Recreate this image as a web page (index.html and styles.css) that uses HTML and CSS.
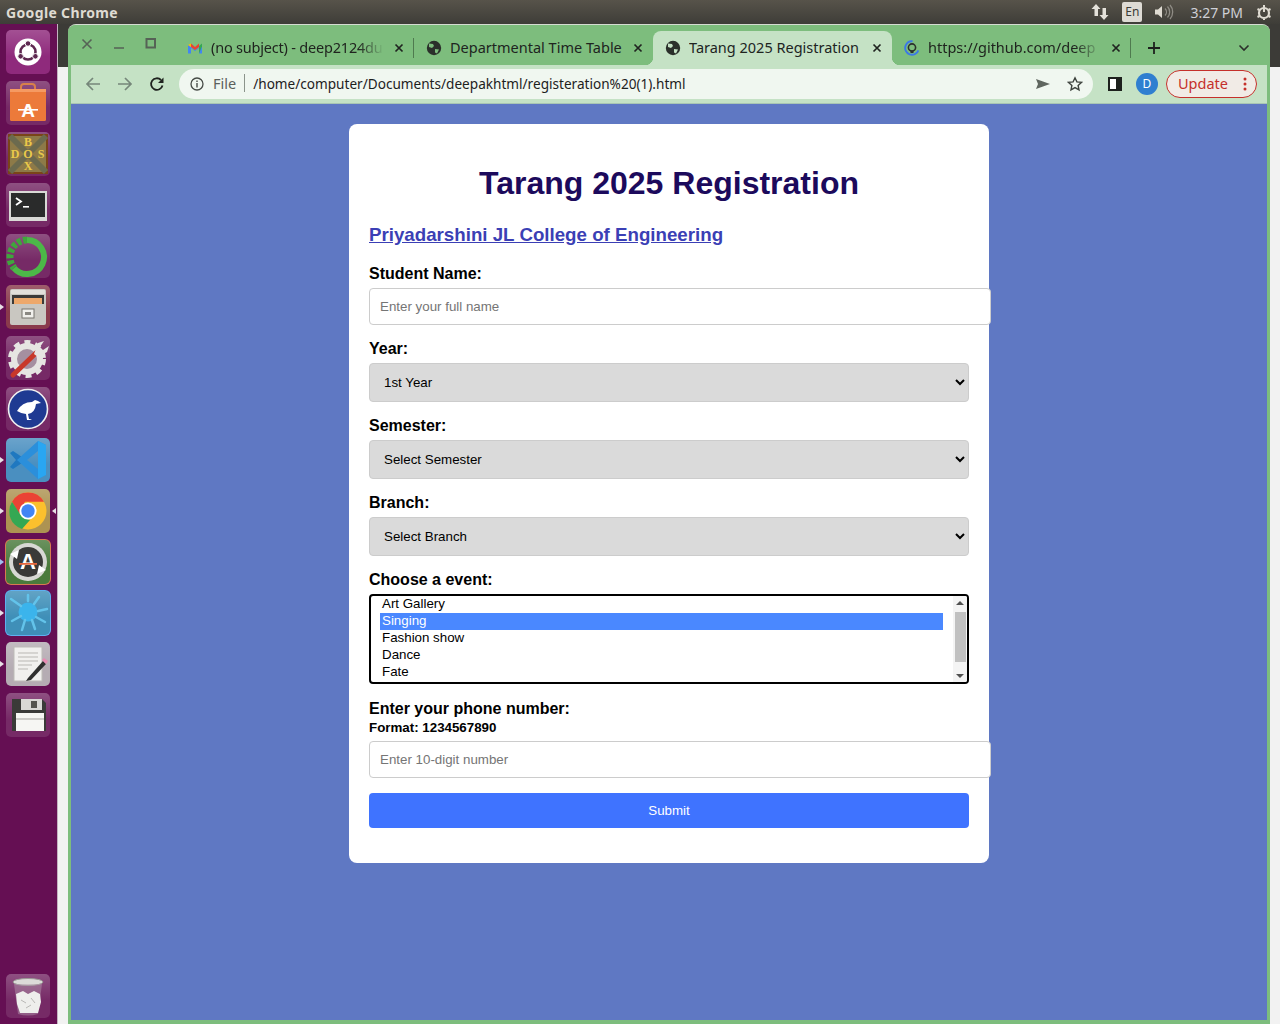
FILE: index.html
```html
<!DOCTYPE html>
<html lang="en">
<head>
    <meta charset="UTF-8">
    <title>Tarang 2025 Registration</title>
    <link rel="stylesheet" href="styles.css">
</head>
<body>
    <!-- ubuntu top panel -->
    <header class="panel">
        <span class="panel-title">Google Chrome</span>
        <div class="tray">
            <svg class="tray-arrows" width="18" height="18" viewBox="0 0 18 18"><path d="M5 1l4.500 5H7v7H3.500V6H.5zM13 17l4.500-5H15V5h-3.500v7H8.500z" fill="#e4e1da"/></svg>
            <span class="tray-lang">En</span>
            <svg class="tray-volume" width="20" height="16" viewBox="0 0 20 16"><path d="M1 5.500h3L8 2v12L4 10.500H1z" fill="#dfdbd2"/><path d="M11 4.500a5 5 0 0 1 0 7M13.500 2.500a8 8 0 0 1 0 11M16 1a10.500 10.500 0 0 1 0 14" fill="none" stroke="#8f8c85" stroke-width="1.300"/></svg>
            <span class="tray-time">3:27 PM</span>
            <svg class="tray-gear" width="16" height="16" viewBox="0 0 16 16"><circle cx="8" cy="9" r="5" fill="none" stroke="#dfdbd2" stroke-width="2.200"/><path d="M8 1v7" stroke="#dfdbd2" stroke-width="2"/><path d="M8 1.500v2M1.500 5l2 1M14.500 5l-2 1M1.500 13l2-1M14.500 13l-2-1M8 15v1" stroke="#dfdbd2" stroke-width="2"/></svg>
        </div>
    </header>

    <div class="desktop">
        <!-- launcher -->
        <nav class="launcher">
            <div class="launcher-top">
                <div class="tile tile-ubuntu">
                    <svg width="44" height="44" viewBox="0 0 44 44"><circle cx="22" cy="22" r="13.500" fill="#fff"/><circle cx="22" cy="22" r="7.500" fill="none" stroke="#5e2750" stroke-width="2.600"/><circle cx="22" cy="13.500" r="2.800" fill="#5e2750" stroke="#fff"/><circle cx="14.600" cy="26.300" r="2.800" fill="#5e2750" stroke="#fff"/><circle cx="29.400" cy="26.300" r="2.800" fill="#5e2750" stroke="#fff"/></svg>
                </div>
                <div class="tile tile-dim">
                    <svg width="44" height="44" viewBox="0 0 44 44"><path d="M15 12V6q0-3 3-3h8q3 0 3 3v6" fill="none" stroke="#d9804a" stroke-width="2"/><rect x="4" y="8" width="36" height="32" rx="1.500" fill="#ec7a3a"/><rect x="4" y="8" width="36" height="3" fill="#f59a62"/><text x="22" y="36" class="icon-letter">A</text><rect x="12" y="28" width="20" height="1.600" fill="#fff"/></svg>
                </div>
                <div class="tile tile-dim">
                    <svg width="44" height="44" viewBox="0 0 44 44"><rect x="3" y="3" width="38" height="38" fill="#8d7a48" stroke="#7a4419" stroke-width="2"/><path d="M4 4l36 36M40 4L4 40" stroke="#6b6a4e" stroke-width="6"/><g class="dos-letters"><text x="22" y="14">B</text><text x="9" y="26">D</text><text x="22" y="26">O</text><text x="35" y="26">S</text><text x="22" y="38">X</text></g></svg>
                </div>
                <div class="tile tile-dim">
                    <svg width="44" height="44" viewBox="0 0 44 44"><rect x="3" y="8" width="38" height="30" fill="#d9d9d6"/><rect x="5" y="10" width="34" height="24" fill="#2a2b2b"/><path d="M10 15l5 3.500-5 3.500" fill="none" stroke="#fff" stroke-width="1.800"/><rect x="17" y="23" width="6" height="1.600" fill="#fff"/></svg>
                </div>
                <div class="tile tile-dim">
                    <svg width="44" height="44" viewBox="0 0 44 44"><path d="M21 6a17 17 0 1 1-13 28" fill="none" stroke="#4cb848" stroke-width="6"/><path d="M21 6A17 17 0 0 0 8 34" fill="none" stroke="#3fa63c" stroke-width="7" stroke-dasharray="4 2"/></svg>
                </div>
                <div class="tile tile-red">
                    <span class="pip"></span>
                    <svg width="44" height="44" viewBox="0 0 44 44"><rect x="4" y="4" width="36" height="36" rx="2" fill="#c9c7c1"/><rect x="5" y="5" width="34" height="4" fill="#e2e0da"/><rect x="6" y="10" width="32" height="9" fill="#3b3a38"/><rect x="8" y="13" width="28" height="6" fill="#eda86b"/><rect x="16" y="24" width="12" height="9" fill="#f1f0ec" stroke="#77756f"/><rect x="19" y="27" width="6" height="3" fill="#8a8882"/></svg>
                </div>
                <div class="tile tile-dim">
                    <svg width="44" height="44" viewBox="0 0 44 44"><circle cx="21" cy="23" r="13" fill="#a58fa0" stroke="#e6e5e2" stroke-width="6"/><circle cx="21" cy="23" r="17" fill="none" stroke="#e6e5e2" stroke-width="4" stroke-dasharray="6 5"/><path d="M7 39l23-22" stroke="#c8382a" stroke-width="5" stroke-linecap="round"/><path d="M28 18l4-11 6-2-4 6 3 3 6-4-2 6-9 5z" fill="#e6e5e2"/></svg>
                </div>
                <div class="tile tile-dim">
                    <svg width="44" height="44" viewBox="0 0 44 44"><circle cx="22" cy="22" r="19.500" fill="#1f3a92" stroke="#f1f1f1" stroke-width="1.600"/><path d="M11 24q5-9 15-9l3-2 3 1 3 2-5 1q-1 9-8 10l1 5h3l-2 1h-3l-1-6q-4 0-9-3z" fill="#fff"/></svg>
                </div>
                <div class="tile tile-blue">
                    <span class="pip"></span>
                    <svg width="44" height="44" viewBox="0 0 44 44"><path d="M13 17L7 13l-3 2 6 7-6 7 3 2 6-4 7-5z" fill="#1f78c0"/><path d="M32 3L11 22l21 19 8-4V7zM32 13v18L21 22z" fill="#2b8fdb" fill-rule="evenodd"/><path d="M32 3l8 4v30l-8 4z" fill="#29a6f2"/></svg>
                </div>
                <div class="tile tile-gold">
                    <span class="pip"></span>
                    <span class="pip pip-right"></span>
                    <svg width="44" height="44" viewBox="0 0 44 44"><circle cx="22" cy="22" r="18.500" fill="#fbc02d"/><path d="M22 3.500a18.500 18.500 0 0 1 16 9.300H22z" fill="#ea4335"/><path d="M6 12.800A18.500 18.500 0 0 1 22 3.500v9.300h-3l-6 12z" fill="#ea4335"/><path d="M6 12.800a18.500 18.500 0 0 0 10 27.300L24 31l-8-3z" fill="#34a853"/><circle cx="22" cy="22" r="8.600" fill="#fff"/><circle cx="22" cy="22" r="6.700" fill="#4285f4"/></svg>
                </div>
                <div class="tile tile-green">
                    <span class="pip pip-hollow"></span>
                    <svg width="44" height="44" viewBox="0 0 44 44"><circle cx="22" cy="22" r="19" fill="#d8d8d4"/><circle cx="22" cy="22" r="15" fill="#3a3a38"/><text x="22" y="29" class="icon-letter icon-letter-big">A</text><rect x="13" y="23" width="18" height="1.800" fill="#e7663c"/><path d="M4 14l9-4-2 9zM40 30l-9 4 2-9z" fill="#fff"/></svg>
                </div>
                <div class="tile tile-sky">
                    <span class="pip"></span>
                    <svg width="44" height="44" viewBox="0 0 44 44"><circle cx="22" cy="21" r="9.500" fill="#3bb4ec"/><path d="M5 8l10 7M22 4v6M33 6l-5 7M41 18l-9 2M39 31l-9-5M29 38l-3-9M16 39l3-10M6 30l9-5" stroke="#63c3ea" stroke-width="2.500" stroke-linecap="round"/></svg>
                </div>
                <div class="tile tile-light">
                    <span class="pip"></span>
                    <svg width="44" height="44" viewBox="0 0 44 44"><rect x="8" y="5" width="28" height="34" fill="#f1f0ee" stroke="#bdbbb7"/><path d="M12 11h20M12 15h20M12 19h20M12 23h14M12 27h10" stroke="#b9b7b3"/><path d="M22 36l15-17 3 3-15 16-5 1z" fill="#2f2f2f"/><path d="M36 18l2-2 4 3-2 3z" fill="#e88ab3"/></svg>
                </div>
                <div class="tile tile-dim">
                    <svg width="44" height="44" viewBox="0 0 44 44"><path d="M6 6h30l4 4v28H6z" fill="#3a3a38"/><rect x="15" y="6" width="21" height="11" fill="#d9d8d5"/><rect x="25" y="8" width="6" height="7" fill="#55544f"/><rect x="10" y="20" width="28" height="18" fill="#f6f6f3"/><path d="M10 26h28" stroke="#a3a19d"/></svg>
                </div>
            </div>
            <div class="tile tile-dim">
                <svg width="44" height="44" viewBox="0 0 44 44"><ellipse cx="22" cy="8" rx="15" ry="3.500" fill="#dcdbd8" stroke="#9a9895"/><path d="M8 10l4 30q10 3 20 0l4-30" fill="#b59cb0" fill-opacity=".45"/><path d="M10 20l7-3 5 3 6-3 6 3 1 8-3 11H14l-3-9z" fill="#eeeeec"/><path d="M15 26l5 3M25 24l4 5M20 34l5-3" stroke="#b9b8b6"/></svg>
            </div>
        </nav>

        <div class="desk">
            <div class="window">
                <!-- tab strip -->
                <div class="tabstrip">
                    <div class="win-controls">
                        <svg width="12" height="12" viewBox="0 0 12 12"><path d="M1.500 1.500l9 9M10.500 1.500l-9 9" stroke="#566256" stroke-width="1.600"/></svg>
                        <svg width="12" height="12" viewBox="0 0 12 12"><path d="M1 10h10" stroke="#566256" stroke-width="1.600"/></svg>
                        <svg width="12" height="12" viewBox="0 0 12 12"><rect x="1.500" y="1" width="8.500" height="8.500" fill="none" stroke="#566256" stroke-width="2"/></svg>
                    </div>
                    <div class="tab tab-sep">
                        <svg class="favicon" width="16" height="16" viewBox="0 0 16 16"><path d="M1 13.500V5l7 5 7-5v8.500h-3V8l-4 3-4-3v5.500z" fill="#4285f4"/><path d="M8 10L4 7V3.500L8 7l4-3.500V7z" fill="#ea4335"/><path d="M12 13.500V6l3-2.500v3z" fill="#34a853"/><path d="M1 5l3-1.500V7z" fill="#fbbc04"/></svg>
                        <span class="tab-title tab-fade tab-tight">(no subject) - deep2124du</span>
                        <svg class="tab-close" width="10" height="10" viewBox="0 0 10 10"><path d="M1.500 1.500l7 7M8.500 1.500l-7 7" stroke="#202420" stroke-width="1.700"/></svg>
                    </div>
                    <div class="tab tab-left-of-active">
                        <svg class="favicon" width="16" height="16" viewBox="0 0 16 16"><circle cx="8" cy="8" r="7.200" fill="#2b302b"/><path d="M3 3.500l4 .5 1 2-2 2-3-1zM9 9l4 .5-2 4-2-1z" fill="#7dbd7d"/></svg>
                        <span class="tab-title">Departmental Time Table</span>
                        <svg class="tab-close" width="10" height="10" viewBox="0 0 10 10"><path d="M1.500 1.500l7 7M8.500 1.500l-7 7" stroke="#202420" stroke-width="1.700"/></svg>
                    </div>
                    <div class="tab tab-active">
                        <svg class="favicon" width="16" height="16" viewBox="0 0 16 16"><circle cx="8" cy="8" r="7.200" fill="#2b302b"/><path d="M3 3.500l4 .5 1 2-2 2-3-1zM9 9l4 .5-2 4-2-1z" fill="#c5e2c5"/></svg>
                        <span class="tab-title">Tarang 2025 Registration</span>
                        <svg class="tab-close" width="10" height="10" viewBox="0 0 10 10"><path d="M1.500 1.500l7 7M8.500 1.500l-7 7" stroke="#202420" stroke-width="1.700"/></svg>
                    </div>
                    <div class="tab tab-sep">
                        <svg class="favicon" width="16" height="16" viewBox="0 0 16 16"><circle cx="8" cy="8" r="6.800" fill="none" stroke="#3b78e7" stroke-width="1.900" stroke-dasharray="30 13" transform="rotate(20 8 8)"/><circle cx="8" cy="7.500" r="3.600" fill="none" stroke="#2b302b" stroke-width="1.600"/><path d="M6.500 10.500v2.500h3v-2.500" fill="#2b302b"/></svg>
                        <span class="tab-title tab-fade">https://github.com/deep</span>
                        <svg class="tab-close" width="10" height="10" viewBox="0 0 10 10"><path d="M1.500 1.500l7 7M8.500 1.500l-7 7" stroke="#202420" stroke-width="1.700"/></svg>
                    </div>
                    <svg class="new-tab" width="12" height="12" viewBox="0 0 12 12"><path d="M6 0v12M0 6h12" stroke="#1d211d" stroke-width="1.800"/></svg>
                    <svg class="tab-search" width="12" height="8" viewBox="0 0 12 8"><path d="M1.500 1.500L6 6l4.500-4.500" fill="none" stroke="#2b302b" stroke-width="1.600"/></svg>
                </div>

                <!-- toolbar -->
                <div class="toolbar">
                    <div class="nav-buttons">
                        <svg width="16" height="16" viewBox="0 0 16 16"><path d="M15 8H2M8 2L2 8l6 6" fill="none" stroke="#76877a" stroke-width="1.700"/></svg>
                        <svg width="16" height="16" viewBox="0 0 16 16"><path d="M1 8h13M8 2l6 6-6 6" fill="none" stroke="#76877a" stroke-width="1.700"/></svg>
                        <svg width="16" height="16" viewBox="0 0 16 16"><path d="M13.500 9.500A5.800 5.800 0 1 1 12 4" fill="none" stroke="#1f231f" stroke-width="1.800"/><path d="M14.500 1.500V7H9z" fill="#1f231f"/></svg>
                    </div>
                    <div class="omnibox">
                        <svg class="info-icon" width="14" height="14" viewBox="0 0 14 14"><circle cx="7" cy="7" r="6" fill="none" stroke="#474c47" stroke-width="1.300"/><path d="M7 6v4.500M7 3.500v1.500" stroke="#474c47" stroke-width="1.400"/></svg>
                        <span class="omni-file">File</span>
                        <span class="omni-url">/home/computer/Documents/deepakhtml/registeration%20(1).html</span>
                        <svg class="omni-send" width="16" height="12" viewBox="0 0 16 12"><path d="M1 1l14 5-14 5 2-5z" fill="#5f665f"/></svg>
                        <svg class="omni-star" width="16" height="16" viewBox="0 0 16 16"><path d="M8 1.800l1.900 4.100 4.500.5-3.300 3 .9 4.500L8 11.600l-4 2.300.9-4.500-3.300-3 4.500-.5z" fill="none" stroke="#3f453f" stroke-width="1.400"/></svg>
                    </div>
                    <svg class="sidebar-icon" width="14" height="14" viewBox="0 0 14 14"><rect x="1" y="1" width="12" height="12" fill="#fff" stroke="#1d211d" stroke-width="2"/><rect x="8" y="1" width="5" height="12" fill="#1d211d"/></svg>
                    <span class="avatar">D</span>
                    <div class="update-pill">
                        <span>Update</span>
                        <svg width="4" height="14" viewBox="0 0 4 14"><circle cx="2" cy="2" r="1.500" fill="#c5302b"/><circle cx="2" cy="7" r="1.500" fill="#c5302b"/><circle cx="2" cy="12" r="1.500" fill="#c5302b"/></svg>
                    </div>
                </div>

                <!-- page content -->
                <main class="viewport">
                    <form class="container">
                        <h1>Tarang 2025 Registration</h1>
                        <h2><a href="#">Priyadarshini JL College of Engineering</a></h2>

                        <label for="student-name">Student Name:</label>
                        <input type="text" id="student-name" placeholder="Enter your full name">

                        <label for="year">Year:</label>
                        <select id="year">
                            <option>1st Year</option>
                            <option>2nd Year</option>
                            <option>3rd Year</option>
                            <option>4th Year</option>
                        </select>

                        <label for="semester">Semester:</label>
                        <select id="semester">
                            <option>Select Semester</option>
                        </select>

                        <label for="branch">Branch:</label>
                        <select id="branch">
                            <option>Select Branch</option>
                        </select>

                        <label for="event">Choose a event:</label>
                        <div class="event-wrap">
                            <select id="event" class="event-list" size="5">
                                <option>Art Gallery</option>
                                <option selected>Singing</option>
                                <option>Fashion show</option>
                                <option>Dance</option>
                                <option>Fate</option>
                                <option>Quiz</option>
                                <option>Debate</option>
                            </select>
                            <div class="list-scrollbar">
                                <span class="arrow-up"></span>
                                <span class="list-thumb"></span>
                                <span class="arrow-down"></span>
                            </div>
                        </div>

                        <label for="phone" class="phone-label">Enter your phone number:</label>
                        <small class="phone-format">Format: 1234567890</small>
                        <input type="text" id="phone" placeholder="Enter 10-digit number">

                        <button type="button" class="submit-btn">Submit</button>
                    </form>
                </main>
            </div>
        </div>
    </div>
</body>
</html>
```

FILE: styles.css
```css
* {
    box-sizing: border-box;
}
html, body {
    margin: 0;
    height: 1024px;
    overflow: hidden;
}
body {
    display: flex;
    flex-direction: column;
    font-family: "Liberation Sans", Arial, sans-serif;
    background: #f2f2f2;
}

/* top panel */
.panel {
    height: 24px;
    flex: none;
    display: flex;
    align-items: center;
    justify-content: space-between;
    padding-left: 6px;
    background: linear-gradient(#57534a, #3e3d38);
    color: #dfdbd2;
    font-family: "Noto Sans", sans-serif;
}
.panel-title {
    font-size: 14px;
    font-weight: 700;
    letter-spacing: .35px;
}
.tray {
    display: flex;
    align-items: center;
}
.tray-arrows {
    margin-right: 13px;
}
.tray-lang {
    width: 20px;
    height: 20px;
    border-radius: 2px;
    background: #dedbd5;
    color: #3c3b37;
    font-size: 12px;
    line-height: 20px;
    text-align: center;
}
.tray-volume {
    margin: 0 16px 0 12px;
}
.tray-time {
    font-size: 14px;
    color: #cfd0d6;
    margin-right: 13px;
}
.tray-gear {
    margin-right: 8px;
}

.desktop {
    flex: 1;
    display: flex;
    min-height: 0;
}

/* launcher */
.launcher {
    width: 58px;
    flex: none;
    display: flex;
    flex-direction: column;
    justify-content: space-between;
    padding: 6px 7px 6px 6px;
    background: #650f53;
    border-right: 1px solid #c4b3c0;
}
.launcher-top {
    display: flex;
    flex-direction: column;
    gap: 7px;
}
.tile {
    position: relative;
    width: 44px;
    height: 44px;
    border-radius: 5px;
    background-image: linear-gradient(rgba(255, 255, 255, .18), rgba(255, 255, 255, 0) 60%);
}
.tile svg {
    display: block;
}
.tile-ubuntu {
    background-color: #8f2a7c;
}
.tile-dim {
    background-color: #762a66;
}
.tile-red {
    background-color: #8a3a4c;
}
.tile-blue {
    background-color: #4a8fc0;
}
.tile-gold {
    background-color: #ad9352;
}
.tile-green {
    background-color: #4a7a3c;
    box-shadow: 0 0 0 1px #d87a50;
}
.tile-sky {
    background-color: #3f8fb8;
    box-shadow: 0 0 0 1px #5fb0f0;
}
.tile-light {
    background-color: #b5acb3;
}
.pip {
    position: absolute;
    left: -6px;
    top: 19px;
    border-left: 4px solid #e8e0e6;
    border-top: 3px solid transparent;
    border-bottom: 3px solid transparent;
}
.pip-right {
    left: auto;
    right: -6px;
    border-left: 0;
    border-right: 4px solid #e8e0e6;
}
.pip-hollow {
    border-left-color: #9fc0ef;
}
.icon-letter {
    font-family: "Liberation Sans", sans-serif;
    font-size: 19px;
    font-weight: 700;
    fill: #fff;
    text-anchor: middle;
}
.icon-letter-big {
    font-size: 22px;
}
.dos-letters text {
    font-family: "Liberation Serif", serif;
    font-size: 12px;
    font-weight: 700;
    fill: #eac94a;
    text-anchor: middle;
}

/* area behind the window */
.desk {
    flex: 1;
    display: flex;
    padding: 0 10px 0 10px;
    background: linear-gradient(#3c3b37 43px, #f2f2f2 43px);
    min-width: 0;
}
.window {
    flex: 1;
    display: flex;
    flex-direction: column;
    background: #7dbd7d;
    border-radius: 8px 8px 0 0;
    border-top: 1px solid #d5dcd2;
    overflow: hidden;
}

/* tabs */
.tabstrip {
    height: 40px;
    flex: none;
    display: flex;
    padding-top: 6px;
    padding-left: 107px;
    position: relative;
    background: #7dbd7d;
    font-family: "Noto Sans", sans-serif;
    font-size: 14.500px;
    color: #20241f;
}
.win-controls {
    position: absolute;
    left: 13px;
    top: 13px;
    display: flex;
    gap: 20px;
}
.tab {
    width: 239px;
    flex: none;
    display: flex;
    align-items: center;
    padding: 0 10px 0 12px;
    position: relative;
}
.favicon {
    flex: none;
    margin-right: 8px;
}
.tab-title {
    flex: 1;
    white-space: nowrap;
    overflow: hidden;
    min-width: 0;
    margin-top: -2px;
}
.tab-fade {
    -webkit-mask-image: linear-gradient(to right, #000 85%, transparent);
    mask-image: linear-gradient(to right, #000 85%, transparent);
}
.tab-tight {
    letter-spacing: -.2px;
}
.tab-close {
    flex: none;
    margin-left: 10px;
}
.tab-sep::after {
    content: "";
    position: absolute;
    right: 0;
    top: 7px;
    height: 20px;
    border-right: 1px solid #4f7a4f;
}
.tab-left-of-active {
    padding-left: 12px;
}
.tab-active {
    background: #c5e2c5;
    border-radius: 8px 8px 0 0;
}
.tab-active::before,
.tab-active::after {
    content: "";
    position: absolute;
    bottom: 0;
    width: 8px;
    height: 8px;
}
.tab-active::before {
    left: -8px;
    background: radial-gradient(circle at 0 0, transparent 8px, #c5e2c5 8.500px);
}
.tab-active::after {
    right: -8px;
    background: radial-gradient(circle at 100% 0, transparent 8px, #c5e2c5 8.500px);
}
.new-tab {
    margin: 11px 0 0 17px;
}
.tab-search {
    margin: 13px 0 0 78px;
}

/* toolbar */
.toolbar {
    height: 39px;
    flex: none;
    display: flex;
    align-items: center;
    margin: 0 3px;
    padding-right: 10px;
    background: #c5e2c5;
    border-bottom: 1px solid #a9c6b4;
    font-family: "Noto Sans", sans-serif;
}
.nav-buttons {
    display: flex;
    gap: 16px;
    padding-left: 14px;
    margin-right: 14px;
}
.omnibox {
    width: 914px;
    height: 30px;
    flex: none;
    display: flex;
    align-items: center;
    padding: 0 10px 0 11px;
    border-radius: 15px;
    background: #f0f7f0;
}
.omni-file {
    margin: -2px 0 0 9px;
    padding-right: 8px;
    border-right: 1px solid #8b948b;
    font-size: 14.500px;
    line-height: 18px;
    color: #5c615c;
}
.omni-url {
    flex: 1;
    margin: -2px 0 0 8px;
    font-size: 13.600px;
    color: #1d211d;
    white-space: nowrap;
}
.omni-send {
    margin-right: 16px;
}
.sidebar-icon {
    margin-left: 15px;
}
.avatar {
    width: 22px;
    height: 22px;
    margin-left: 14px;
    border-radius: 50%;
    background: #2f7fd0;
    color: #fff;
    font-size: 12px;
    line-height: 22px;
    text-align: center;
}
.update-pill {
    width: 91px;
    height: 28px;
    margin-left: 8px;
    display: flex;
    align-items: center;
    justify-content: space-between;
    padding: 0 9px 2px 11px;
    border: 1px solid #c5302b;
    border-radius: 14px;
    background: #f1ebe6;
    color: #c5302b;
    font-size: 14.500px;
}
.update-pill svg {
    margin-top: 2px;
}

/* page */
.viewport {
    flex: 1;
    min-height: 0;
    margin: 0 3px 4px;
    padding-top: 20px;
    background: #5f78c3;
}
.container {
    width: 640px;
    height: 739px;
    margin: 0 auto;
    padding: 20px;
    background: #fff;
    border-radius: 8px;
    color: #000;
}
h1 {
    margin: 21px 0 22px;
    font-size: 32px;
    line-height: 37px;
    text-align: center;
    color: #1c0a5c;
}
h2 {
    margin: 0 0 19px;
    font-size: 18.720px;
    line-height: 22px;
}
h2 a {
    color: #3b3fb5;
}
label {
    display: block;
    margin-bottom: 5px;
    font-size: 16px;
    font-weight: 700;
    line-height: 18px;
}
input[type="text"] {
    display: block;
    width: 622px;
    height: 37px;
    margin-bottom: 15px;
    padding: 10px;
    border: 1px solid #ccc;
    border-radius: 4px;
    font-family: inherit;
    font-size: 13.333px;
}
select {
    display: block;
    width: 100%;
    height: 39px;
    margin-bottom: 15px;
    padding: 0 10px;
    border: 1px solid #ccc;
    border-radius: 4px;
    background-color: #dadada;
    font-family: inherit;
    font-size: 13.333px;
    color: #000;
}
.event-wrap {
    position: relative;
    margin-bottom: 16px;
}
.event-list {
    height: 90px;
    margin-bottom: 0;
    padding: 0 24px 0 9px;
    border: 2px solid #000;
    background: #fff;
    overflow-y: hidden;
}
.event-list option {
    padding: 0 2px;
    min-height: 17px;
    line-height: 17px;
}
.event-list option:checked {
    background: linear-gradient(#4a88ff, #4a88ff);
    color: #fff;
}
/* headless chrome hides the real scrollbar of the list, so it is drawn on top */
.list-scrollbar {
    position: absolute;
    top: 2px;
    right: 2px;
    bottom: 2px;
    width: 14px;
    display: flex;
    flex-direction: column;
    align-items: center;
    justify-content: space-between;
    padding: 5px 0 4px;
    background: #f4f4f4;
    border-radius: 0 2px 2px 0;
}
.arrow-up {
    border: 4px solid transparent;
    border-top: 0;
    border-bottom: 4px solid #505050;
}
.arrow-down {
    border: 4px solid transparent;
    border-bottom: 0;
    border-top: 4px solid #505050;
}
.list-thumb {
    width: 11px;
    height: 50px;
    margin-bottom: 6px;
    background: #c1c1c1;
}
.phone-label {
    margin-bottom: 2px;
}
.phone-format {
    display: block;
    margin-bottom: 6px;
    font-size: 13.333px;
    font-weight: 700;
    line-height: 15px;
}
.submit-btn {
    display: block;
    width: 100%;
    height: 35px;
    padding: 0;
    border: none;
    border-radius: 4px;
    background-color: #3f73ff;
    color: #fff;
    font-family: inherit;
    font-size: 13.333px;
}
```
